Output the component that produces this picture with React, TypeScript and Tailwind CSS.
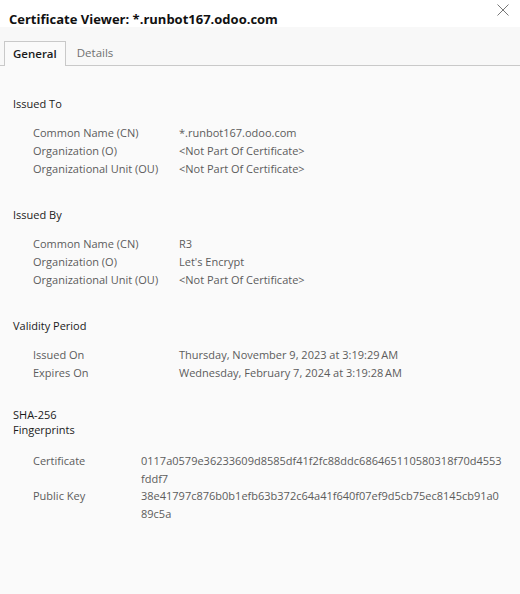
const font = { fontFamily: "'Segoe UI', 'Open Sans', 'Noto Sans', sans-serif" };

type Row = { label: string; value: string };

const sections: { title: string; rows: Row[] }[] = [
  {
    title: "Issued To",
    rows: [
      { label: "Common Name (CN)", value: "*.runbot167.odoo.com" },
      { label: "Organization (O)", value: "<Not Part Of Certificate>" },
      { label: "Organizational Unit (OU)", value: "<Not Part Of Certificate>" },
    ],
  },
  {
    title: "Issued By",
    rows: [
      { label: "Common Name (CN)", value: "R3" },
      { label: "Organization (O)", value: "Let's Encrypt" },
      { label: "Organizational Unit (OU)", value: "<Not Part Of Certificate>" },
    ],
  },
  {
    title: "Validity Period",
    rows: [
      { label: "Issued On", value: "Thursday, November 9, 2023 at 3:19:29\u2009AM" },
      { label: "Expires On", value: "Wednesday, February 7, 2024 at 3:19:28\u2009AM" },
    ],
  },
];

// hashes wrap after 59 characters in the dialog
const fingerprints: { label: string; lines: string[] }[] = [
  { label: "Certificate", lines: ["0117a0579e36233609d8585df41f2fc88ddc686465110580318f70d4553", "fddf7"] },
  { label: "Public Key", lines: ["38e41797c876b0b1efb63b372c64a41f640f07ef9d5cb75ec8145cb91a0", "89c5a"] },
];

export default function App() {
  return (
    <div className="w-[520px] h-[594px] bg-[#fafafa] flex flex-col overflow-hidden" style={font}>
      <div className="h-[27px] bg-white flex items-start justify-between pl-[9px] pr-[11px]">
        <h1 className="mt-[10px] text-[13px] leading-[18px] font-bold text-[#111]">Certificate Viewer: *.runbot167.odoo.com</h1>
        <svg width="12" height="12" viewBox="0 0 12 12" className="mt-[4px]">
          <path d="M0.5 0.5 L11.5 11.5 M11.5 0.5 L0.5 11.5" stroke="#777" strokeWidth="1" />
        </svg>
      </div>

      <div className="h-[39px] bg-[#f8f8f8] flex items-end px-[4px] border-b border-[#c9c9c9]">
        <div className="h-[25px] -mb-px px-[8px] bg-[#fafafa] border border-b-0 border-[#c9c9c9] flex items-center text-[11.5px] font-semibold text-[#1a1a1a]">
          General
        </div>
        <div className="h-[25px] px-[11px] flex items-center text-[11.5px] text-[#707070]">Details</div>
      </div>

      <div className="pl-[13px] pt-[29px] text-[#5c5c5c] text-[11px]">
        {sections.map((s) => (
          <section key={s.title} className="mb-[28px]">
            <h2 className="leading-[18px] text-[#1a1a1a]">{s.title}</h2>
            <div className="mt-[11px] pl-[20px]">
              {s.rows.map((r) => (
                <div key={r.label} className="flex leading-[18px]">
                  <span className="w-[146px] shrink-0">{r.label}</span>
                  <span>{r.value}</span>
                </div>
              ))}
            </div>
          </section>
        ))}

        <section className="-mt-[3px]">
          <h2 className="leading-[15px] text-[#1a1a1a]">
            SHA-256
            <br />
            Fingerprints
          </h2>
          <div className="mt-[15px] pl-[20px]">
            {fingerprints.map((r) => (
              <div key={r.label} className="flex leading-[17.5px]">
                <span className="w-[108px] shrink-0">{r.label}</span>
                <span>
                  {r.lines[0]}
                  <br />
                  {r.lines[1]}
                </span>
              </div>
            ))}
          </div>
        </section>
      </div>
    </div>
  );
}
